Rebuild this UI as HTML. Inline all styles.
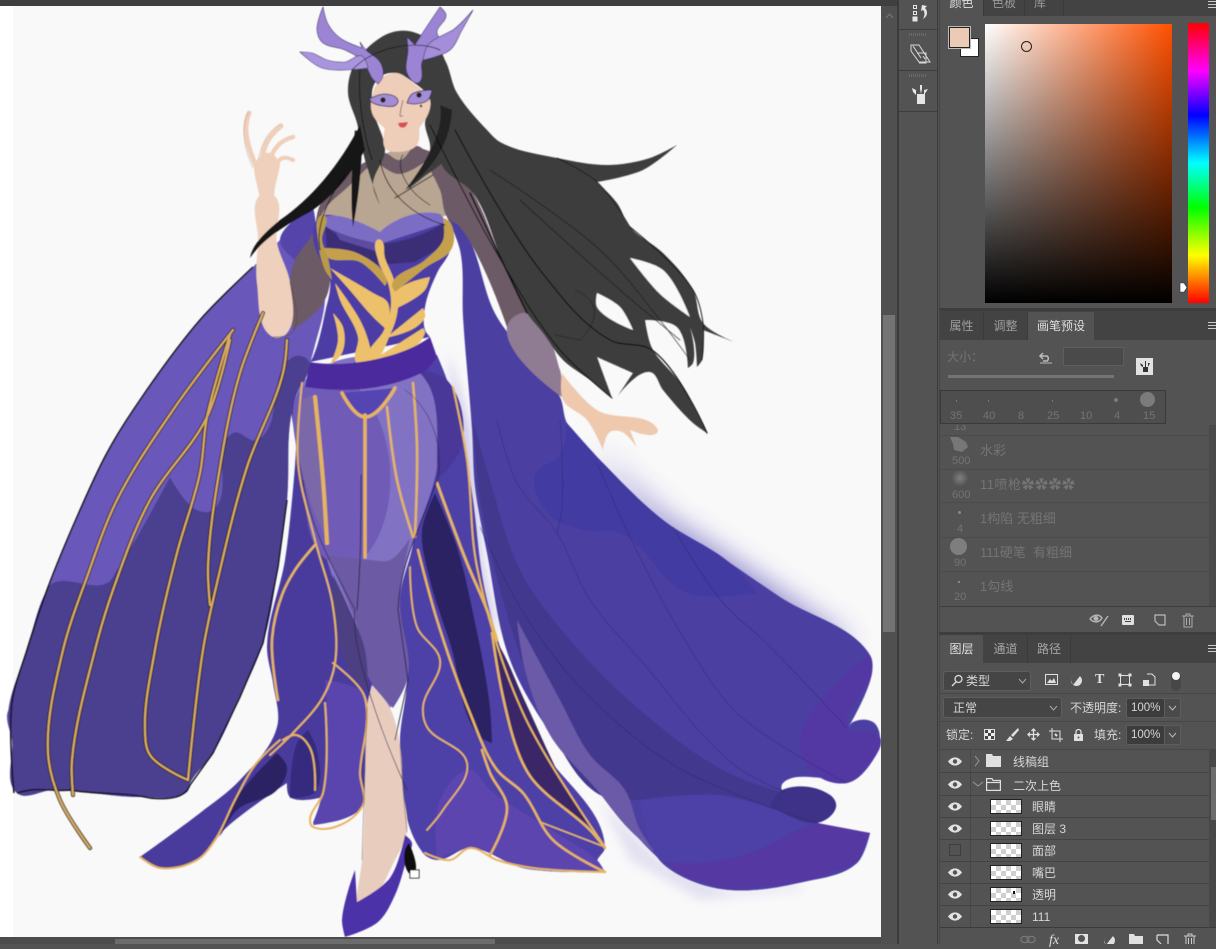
<!DOCTYPE html>
<html><head><meta charset="utf-8"><style>
*{box-sizing:border-box}
html,body{margin:0;padding:0;width:1216px;height:944px;overflow:hidden;background:#535353;font-family:"Liberation Sans","Noto Sans CJK SC",sans-serif}
.a{position:absolute}
.t{position:absolute;white-space:nowrap;line-height:16px;font-size:12px;color:#d6d6d6}
.d{color:#747474}
.tab{position:absolute;text-align:center;font-size:12px;line-height:16px;white-space:nowrap}
.ln{position:absolute;background:#3d3d3d}
.box{position:absolute;background:#454545;border:1px solid #5e5e5e;border-radius:3px}
.inp{position:absolute;background:#3c3c3c;border:1px solid #5c5c5c;border-radius:2px;color:#d6d6d6;font-size:11.5px;line-height:18px;padding-left:4px}
.th{position:absolute;left:990px;width:32px;height:15px;border:1px solid #222;background:repeating-conic-gradient(#cfcfcf 0 25%,#fff 0 50%) 0 0/10px 10px}
.eye{position:absolute;left:948px}
</style></head><body>
<svg id="p" class="a" style="left:0;top:0" width="881" height="944" viewBox="0 0 881 944">
<defs>
<filter id="g" x="-30%" y="-30%" width="160%" height="160%"><feGaussianBlur stdDeviation="15"/></filter>
<filter id="g2" x="-30%" y="-30%" width="160%" height="160%"><feGaussianBlur stdDeviation="5"/></filter>
<filter id="s"><feGaussianBlur stdDeviation="0.45"/></filter>
</defs>
<rect width="881" height="944" fill="#fff"/>
<rect x="13" y="6" width="868" height="931" fill="#f9f9fa"/>
<!-- glows -->
<path d="M590 450L663 520L730 563L780 597L850 645L830 650L760 610L660 540Z" fill="#5549b4" filter="url(#g)" opacity=".95"/>
<path d="M600 800L660 860L730 892L803 884L800 890L700 900L630 860Z" fill="#8c84cc" filter="url(#g2)" opacity=".2"/>
<path d="M448 350L470 430L482 560L500 640L480 600L462 470Z" fill="#a8a2da" filter="url(#g2)" opacity=".6"/>
<g filter="url(#s)">
<!-- left cape -->
<path d="M313 207L280 240L253 267L200 320L140 400L107 453L77 517L47 590L27 650L12 703L7 715L12 740L17 793L53 790L143 797L187 792L190 783L213 753L240 697L263 643L278 567L287 500L293 407L303 385L315 345L325 300L320 250Z" fill="#6959ba"/>
<path d="M53 583L107 583L117 570L170 477L197 510L213 510L233 433L257 440L293 357L308 360L303 385L293 407L287 500L278 567L263 643L240 697L213 753L190 783L187 792L143 797L53 790L17 793L12 740L8 715L27 650L47 590Z" fill="#4b4190"/>
<path d="M313 207L280 240L295 260L315 230Z" fill="#5444aa"/>
<path d="M253 267L200 320L140 400L107 453L77 517L47 590L27 650L12 703L14 793" fill="none" stroke="#111" stroke-width="1.500"/>
<path d="M17 793C40 786 50 792 70 790C100 795 125 792 150 798C170 800 185 798 190 785L213 753L240 697L263 643L278 567L287 500" fill="none" stroke="#111" stroke-width="1.400"/>
<!-- right cape -->
<path d="M447 217L460 225L497 317L560 397L567 423L603 463L663 520L730 563L780 597L870 655L872 673L848 728L853 722L873 722L880 737L873 760L847 783L823 778L783 783L782 790L790 793L830 795L836 807L817 823L870 833L857 863L803 882L730 890L683 877L657 857L597 790L553 737L510 660L487 553L475 487L472 430L463 317L460 250Z" fill="#4c3fa2"/>
<path d="M473 420L480 500L515 640L553 735L600 795L640 800L720 795L817 823L836 807L790 795L723 770L640 710L570 640L520 570L490 480Z" fill="#42388e"/>
<path d="M517 620L560 700L590 755L625 790L640 830L657 855L625 825L597 790L550 735L525 670Z" fill="#6a5aa8"/>
<path d="M640 800L720 795L817 823L870 833L857 863L803 882L730 890L683 877L657 857Z" fill="#4e41a6"/>
<path d="M665 862C710 868 760 855 790 833L817 823L870 833L857 863L803 882L730 890L683 877Z" fill="#5437a2"/>
<path d="M567 423L603 463L663 520L730 563L757 593L687 593L620 533L583 530L550 515L535 475L560 455Z" fill="#433aa2"/>
<path d="M840 680L870 655L872 673L848 728L880 737L873 760L847 783L810 770L800 740Z" fill="#5339a4"/>
<path d="M782 790L830 795L836 807L817 823L770 805Z" fill="#3d3388"/>
<g fill="none" stroke="#2b2468" stroke-width=".6" opacity=".7">
<path d="M497 420L517 483L557 533L590 600L643 663L737 767L787 793"/>
<path d="M560 420L562 507L557 533"/>
<path d="M597 463L630 537L683 637L737 713L847 783"/>
<path d="M673 527L723 603L763 640L847 728"/>
<path d="M480 527L520 607L580 687L677 767L817 823"/>
</g>
<!-- left skirt -->
<path d="M298 390L296 450L292 500L285 560L267 647L273 683L277 727L240 780L200 813L140 857L157 868L197 860L227 827L287 783L290 797L323 797L313 823L340 820L362 807L380 700L340 560L320 390Z" fill="#4a3b9c"/>
<path d="M325 680L365 695L360 775L362 807L313 825L323 790L327 720Z" fill="#5a44ae"/>
<path d="M277 753L287 767L277 790L237 810L220 837L237 797Z" fill="#2a2262"/>
<path d="M297 743L308 730L317 750L315 792L290 798Z" fill="#36297e"/>
<!-- right skirt -->
<path d="M420 370L437 355L447 380L463 440L472 493L487 600L537 740L605 847L597 863L605 872L523 868L470 848L437 860L423 853L400 747L407 680L400 597L413 543Z" fill="#4e3fa6"/>
<path d="M437 860L470 848L523 868L605 872L597 860L560 835L490 790L470 770L440 800Z" fill="#5c44ae"/>
<path d="M420 370L447 380L463 440L447 470L435 480Z" fill="#493798"/>
<path d="M435 493L422 530L430 580L450 643L480 737L492 743L490 707L473 613L457 547Z" fill="#2a2262"/>
<path d="M493 637L503 690L517 747L530 777L593 828L573 800L523 697L500 647Z" fill="#3a2868"/>
<!-- center panel -->
<path d="M305 380L416 370L437 465L433 485L413 543L400 597L407 680L390 708L370 680L327 560L303 480Z" fill="#8272c4"/>
<path d="M305 385L360 390L362 560L345 560L327 560L303 480Z" fill="#6f5cb6"/>
<path d="M303 400L315 395L325 480L330 545L310 500Z" fill="#7a68a8"/>
<path d="M327 555L370 560L390 560L410 538L400 597L407 680L393 708L370 680L357 625Z" fill="#6c5aa5"/>
<path d="M333 575L345 600L365 650L368 690L355 680L335 620Z" fill="#4d3f82"/>
<path d="M342 393L395 388L365 417Z" fill="#5545b2"/>
<!-- leg -->
<path d="M372 685L390 708L400 745L403 790L407 832L395 860L365 905L355 905L362 860L365 780L367 707Z" fill="#e8cdbf"/>
<!-- shoe -->
<path d="M355 870L357 902L390 878L405 835L412 843L408 855L395 895L378 922L345 937L342 920Z" fill="#4c33a8"/>
<path d="M409 843L416 868L413 875L408 872L405 850Z" fill="#0c0c0c"/>
<rect x="410" y="870" width="9" height="8" fill="#fff" stroke="#111"/>
<!-- chest -->
<path d="M383 155L417 147L447 215L380 232L320 215L330 190Z" fill="#b8a592"/>
<path d="M383 153L345 175L320 205L313 233L295 260L290 283L293 330L322 305L330 280L318 240L322 214L350 185Z" fill="#6c5a66"/>
<path d="M417 147L447 160L473 193L503 263L527 313L507 327L460 227L447 217L440 190Z" fill="#6c5a66"/>
<path d="M507 327L527 313L560 370L562 397Z" fill="#8f7b92"/>
<path d="M383 153L400 160L417 146L430 158L398 174L375 160Z" fill="#6c5a66"/>
<!-- right hand -->
<path d="M562 373L597 410L657 428L657 433L630 430L637 448L622 432L610 432L603 450L587 420L563 400Z" fill="#efc9ae"/>
<!-- left arm & hand -->
<path d="M260 195L258 240L257 283L273 337L287 333L290 283L277 243L274 195Z" fill="#efd0bd"/>
<path d="M255 163C252 172 258 185 260 200L274 200C274 185 278 178 280 165C275 150 265 148 255 163Z" fill="#efd0bd"/>
<g fill="none" stroke="#efcfba" stroke-linecap="round">
<path d="M257 168C244 140 244 125 249 113" stroke-width="5"/>
<path d="M262 160C264 143 270 135 281 126" stroke-width="5"/>
<path d="M269 160C276 145 282 140 293 137" stroke-width="4.500"/>
<path d="M276 172C277 158 282 155 293 160" stroke-width="4"/>
</g>
<g fill="none" stroke="#a78f82" stroke-width=".4"><path d="M253 168C240 140 243 120 249 112"/><path d="M258 160C262 143 268 130 281 124"/></g>
<!-- bodice -->
<path d="M320 217L313 237L327 273L330 280L325 313L313 357L310 362L430 337L425 330L425 307L437 273L450 250L448 223L420 218L380 232L350 220Z" fill="#4c3da3"/>
<path d="M323 217C340 212 360 222 380 232C390 222 415 208 440 214L447 222L380 244C360 240 340 235 325 226Z" fill="#7c6dc4"/>
<path d="M325 226C340 240 365 244 380 244C400 243 425 235 446 222L448 243L415 262L378 265L327 252Z" fill="#3a2d77"/>
<path d="M335 232C350 238 365 240 378 244L378 252L340 240Z" fill="#5b4ba0"/>
<!-- gold bodice -->
<g fill="#edc06c">
<path d="M330 268L373 293L388 303L387 330L373 317L347 287Z"/>
<path d="M335 283L360 320L370 347L371 362L357 363L358 337L340 300Z"/>
<path d="M333 313L343 327L342 353L330 365L338 340Z"/>
<path d="M395 293L430 277L425 290L397 308Z"/>
<path d="M387 337L423 308L425 317L390 337Z"/>
<path d="M373 360L423 328L425 333L380 362Z"/>
<path d="M323 248L357 253L387 280L385 286L360 262L327 257Z" fill="#c4a04e"/>
<path d="M377 240L381 240L385 258L394 280L398 307L390 335L372 361L368 358L384 330L391 305L388 283L378 260Z"/>
<path d="M320 216L325 216L322 240L328 258L332 280L325 270L318 240Z" fill="#b89a4a"/>
<path d="M443 218L450 222L452 248L425 268L395 292L392 284L425 260L443 240Z" fill="#c4a04e"/>
</g>
<!-- belt -->
<path d="M310 362C340 368 400 360 430 337L437 357L427 370C400 385 360 395 305 387Z" fill="#4b2a9e"/>
<!-- skirt gold -->
<g fill="none" stroke="#e6b45e" stroke-linecap="round" stroke-linejoin="round">
<path d="M315 397L323 480L327 543" stroke-width="4"/>
<path d="M342 393L365 417L395 388" stroke-width="3.500"/>
<path d="M365 415L365 557" stroke-width="3.500"/>
<path d="M387 407L397 480L413 537" stroke-width="2.500"/>
<path d="M413 383L417 447L415 537" stroke-width="2.500"/>
<path d="M302 383L298 463L315 540L333 607L335 663L323 697L293 733L270 755" stroke-width="2"/>
<path d="M315 545L295 570L282 595L272 640L278 700" stroke-width="2.500"/>
<path d="M333 663L363 693L367 713L360 773L362 807L313 827L310 820L323 793L325 703" stroke-width="2"/>
<path d="M283 740L296 735L310 748L315 790" stroke-width="2"/>
<path d="M140 857L160 868L197 860L215 840L235 800L255 765L280 740" stroke-width="2"/>
<path d="M437 483L467 563L487 610L497 640" stroke-width="2.800"/>
<path d="M492 633L503 697L520 757L533 780L590 830L605 848" stroke-width="2.500"/>
<path d="M410 567L417 627L440 660L423 707L427 727L467 763L443 810L427 830" stroke-width="1.800"/>
<path d="M418 550L437 620L470 713L497 770L523 793L553 840L605 872" stroke-width="2.500"/>
<path d="M482 750L490 773L507 807L490 855" stroke-width="2.500"/>
<path d="M425 853L450 860L470 848L497 860L533 868L605 872" stroke-width="2"/>
<path d="M453 387L467 460L477 567L523 713L605 847" stroke-width="2"/>
<path d="M540 822L605 847" stroke-width="1.500"/>
</g>
<!-- left cape gold -->
<g fill="none" stroke-linecap="round" stroke-linejoin="round">
<g stroke="#111" stroke-width="4">
<path d="M233 330L173 410L117 500L87 577L63 650L48 753L60 800L90 848"/>
<path d="M230 340L207 417L150 500L113 590L95 650L72 760L73 795"/>
<path d="M230 335L207 417L200 473L177 553L155 650L145 730L150 755L188 780"/>
<path d="M263 313L240 373L220 467L208 567L210 605"/>
<path d="M287 340L283 373L247 467L217 583L203 650L188 780"/>
</g>
<g stroke="#d8aa62" stroke-width="2.300">
<path d="M233 330L173 410L117 500L87 577L63 650L48 753L60 800L90 848"/>
<path d="M230 340L207 417L150 500L113 590L95 650L72 760L73 795"/>
<path d="M230 335L207 417L200 473L177 553L155 650L145 730L150 755L188 780"/>
<path d="M263 313L240 373L220 467L208 567L210 605"/>
<path d="M287 340L283 373L247 467L217 583L203 650L188 780"/>
</g>
</g>
<!-- right hair -->
<path d="M413 32L443 57L457 93L487 130L500 142L557 158L610 165L650 158L677 145L643 170L597 182L617 203L630 227L663 253L693 290L703 323L737 343L703 330L702 360L697 367L695 343L690 327L693 363L688 368L677 327L645 320L652 348L680 383L707 433L693 423L663 390L650 372L617 397L633 373L597 357L612 398L590 380L563 360L543 333L527 313L503 263L473 193L443 167L430 100Z" fill="#3c3c3c"/>
<!-- hair gaps -->
<path d="M630 258L663 270L690 317L660 294Z" fill="#f9f9fa"/>
<path d="M597 293L620 307L633 330L597 307Z" fill="#f9f9fa"/>
<!-- head hair -->
<path d="M373 43L393 32L413 32L440 50L450 110L452 150L420 180L407 190L430 150L425 123L430 100L410 80L395 73L383 75L373 87L375 115L385 150L373 185L380 205L365 160L357 123L348 93L353 67Z" fill="#3e3e3e"/>
<!-- face -->
<path d="M375 87L372 113L387 130L403 138L423 123L430 100L413 83L397 73L383 77Z" fill="#eecdb9"/>
<path d="M385 128L385 148L395 152L417 145L419 128L403 138Z" fill="#eecdb9"/>
<!-- black strands -->
<path d="M360 125C340 165 310 200 280 220C265 232 252 245 250 258C262 240 285 225 310 212C335 195 350 175 365 150Z" fill="#141414"/>
<path d="M355 130C352 160 350 200 353 227C358 200 362 170 362 135Z" fill="#141414"/>
<path d="M440 105C445 130 425 165 405 190C425 175 450 150 452 110Z" fill="#222"/>
<!-- horns -->
<path d="M323 7L317 30L322 42L345 50L362 60L368 70L372 78L378 84L383 76L380 62L366 50L360 42L362 48L340 38L328 24Z" fill="#9c84d4" stroke="#3a2f66" stroke-width=".6"/>
<path d="M300 52L322 68L368 68L362 56L345 62L327 60L312 53Z" fill="#a995de" stroke="#3a2f66" stroke-width=".6"/>
<path d="M440 7L420 37L415 45L407 37L408 50L407 73L417 83L421 80L423 60L440 53L450 46L437 33L446 15Z" fill="#9c84d4" stroke="#3a2f66" stroke-width=".6"/>
<path d="M473 10L453 30L447 33L428 45L423 60L450 50L462 30Z" fill="#a48dd9" stroke="#3a2f66" stroke-width=".6"/>
<!-- eyes -->
<path d="M369 99L385 94L398 100L396 105L384 106L373 103Z" fill="#a48dd4" stroke="#2a2250" stroke-width=".8"/>
<path d="M407 103L412 94L432 90L428 100L415 104Z" fill="#a48dd4" stroke="#2a2250" stroke-width=".8"/>
<circle cx="383" cy="100" r="2.600" fill="#222"/><circle cx="419" cy="95" r="2.600" fill="#222"/>
<circle cx="421" cy="106" r="1.200" fill="#222"/>
<path d="M403 100C401 108 400 112 400 116L403 116" fill="none" stroke="#6a5048" stroke-width=".7"/>
<path d="M398 123L408 122L405 127L400 127Z" fill="#d84f55"/>
<!-- hair outlines -->
<g fill="none" stroke="#111" stroke-linecap="round">
<path d="M430 125L495 250L560 350L612 398" stroke-width="1"/>
<path d="M455 130L540 270L610 340L652 350L707 433" stroke-width="1.200"/>
<path d="M470 193L503 263L527 313" stroke-width="1.500"/>
<path d="M520 200L620 290L680 340" stroke-width=".6"/>
<path d="M490 170L600 250L660 320L690 360" stroke-width=".6"/>
<path d="M630 227L693 290L703 323L702 360" stroke-width=".9"/>
<path d="M557 158L597 182L630 227" stroke-width=".7"/>
<path d="M575 290C600 300 600 320 580 340L555 335" stroke-width=".5"/>
<path d="M345 175C330 195 315 225 320 250" stroke-width=".9"/>
<path d="M380 160C385 190 410 215 445 225" stroke-width=".8"/>
<path d="M403 155C395 165 405 190 430 205" stroke-width=".7"/>
<path d="M433 175L395 198" stroke-width=".9"/>
<path d="M360 70C358 95 362 130 372 160" stroke-width=".9"/>
<path d="M352 70C375 45 420 40 440 50" stroke-width=".7"/>
<path d="M303 480C310 530 340 580 355 610C350 640 375 720 407 790" stroke-width=".7" stroke="#2a2040"/>
<path d="M437 480C420 530 400 560 398 610L408 680L395 740" stroke-width=".8" stroke="#1a1530"/>
<path d="M361 475L360 560L357 610" stroke-width=".8" stroke="#1a1530"/>
<path d="M405 390C420 400 445 430 438 480" stroke-width=".5" stroke="#1a1530"/>
<path d="M367 707L362 860M400 745L403 790L407 832" stroke-width=".5" stroke="#6d5d58"/>
<path d="M290 283L293 332L273 337" stroke-width=".6" stroke="#5d4a40"/>
</g>
</g>
</svg>
<script>
(function(){
var N=function(x,y){var l=Math.hypot(x,y)||1;return[x/l,y/l]};
function seg(P,closed){var n=P.length,T=[],i;
 if(n<3)return 'M'+P.map(function(p){return p.join(' ')}).join('L')+(closed?'Z':'');
 for(i=0;i<n;i++){var h=closed?P[(i-1+n)%n]:P[i-1],k=closed?P[(i+1)%n]:P[i+1];
  if(!h||!k){T[i]=null;continue}
  var a=N(P[i][0]-h[0],P[i][1]-h[1]),b=N(k[0]-P[i][0],k[1]-P[i][1]);
  T[i]=(a[0]*b[0]+a[1]*b[1])<-0.15?null:N(a[0]+b[0],a[1]+b[1]);}
 var d='M'+P[0].join(' '),m=closed?n:n-1;
 for(i=0;i<m;i++){var p=P[i],j=(i+1)%n,q=P[j],L=Math.hypot(q[0]-p[0],q[1]-p[1])/3,t=T[i],u=T[j];
  var c1=t?[p[0]+t[0]*L,p[1]+t[1]*L]:p,c2=u?[q[0]-u[0]*L,q[1]-u[1]*L]:q;
  d+='C'+c1[0].toFixed(1)+' '+c1[1].toFixed(1)+' '+c2[0].toFixed(1)+' '+c2[1].toFixed(1)+' '+q[0]+' '+q[1];}
 return d+(closed?'Z':'');}
var list=document.querySelectorAll('#p g path');
for(var z=0;z<list.length;z++){var e=list[z],s=e.getAttribute('d');
 if(!/^[MLZ\d\s.\-]+$/.test(s))continue;
 var tk=s.match(/[MLZ]|-?[\d.]+/g),out='',P=[],w=0;
 while(w<tk.length){var c=tk[w];
  if(c==='M'){if(P.length)out+=seg(P,false);P=[[+tk[w+1],+tk[w+2]]];w+=3}
  else if(c==='L'){P.push([+tk[w+1],+tk[w+2]]);w+=3}
  else{out+=seg(P,true);P=[];w++}}
 if(P.length)out+=seg(P,false);
 e.setAttribute('d',out);}
})();
</script>
<!-- top bar -->
<div class="a" style="left:0;top:0;width:899px;height:6px;background:#3f3f3f"></div>
<!-- bottom scrollbar -->
<div class="a" style="left:0;top:937px;width:881px;height:7px;background:#4c4c4c"></div>
<div class="a" style="left:115px;top:939px;width:380px;height:5px;background:#6c6c6c"></div>
<!-- vertical scrollbar -->
<div class="a" style="left:881px;top:6px;width:16px;height:938px;background:#505050"></div>
<div class="a" style="left:897px;top:0;width:2px;height:944px;background:#3b3b3b"></div>
<div class="a" style="left:883px;top:315px;width:12px;height:317px;background:#747474"></div>
<svg class="a" style="left:885px;top:13px" width="9" height="6"><path d="M1 5L4.500 1L8 5" fill="none" stroke="#777"/></svg>
<!-- dock -->
<div class="a" style="left:899px;top:0;width:39px;height:944px;background:#535353;border-right:1px solid #3b3b3b"></div>
<div class="ln" style="left:899px;top:29px;width:38px;height:1px"></div>
<div class="ln" style="left:899px;top:70px;width:38px;height:1px"></div>
<div class="ln" style="left:899px;top:111px;width:38px;height:1px"></div>
<div class="a" style="left:909px;top:33px;width:18px;height:3px;background:repeating-linear-gradient(90deg,#6b6b6b 0 1px,transparent 1px 2px)"></div>
<div class="a" style="left:909px;top:74px;width:18px;height:3px;background:repeating-linear-gradient(90deg,#6b6b6b 0 1px,transparent 1px 2px)"></div>
<svg class="a" style="left:908px;top:2px" width="22" height="22" fill="none" stroke="#e6e6e6"><rect x="5.500" y="3.500" width="3" height="3"/><rect x="5.500" y="9.500" width="3" height="3"/><rect x="5" y="15" width="4" height="4" fill="#e6e6e6"/><path d="M14 3L19 4L17 6C20 9 20 14 15 17C17 13 17 10 15 8L13 9Z" fill="#e6e6e6" stroke="none"/></svg>
<svg class="a" style="left:908px;top:42px" width="24" height="24" fill="none" stroke="#d8d8d8" stroke-width="1"><path d="M3 3L11 3L22 20L11 20L3 9Z"/><path d="M5 4L13 16M9 11L18 11L18 21L11 21"/><path d="M15 14L17 17"/></svg>
<svg class="a" style="left:908px;top:82px" width="24" height="24" fill="#e6e6e6"><rect x="9" y="12" width="8" height="10"/><path d="M4 6L8 8L8 13L5 10Z"/><path d="M12 3L14 3L14 7L13 12L12 7Z"/><path d="M16 8L20 7L18 10L16 13Z"/></svg>
<!-- right panel bg -->
<div class="a" style="left:939px;top:0;width:277px;height:944px;background:#535353;border-left:1px solid #444"></div>
<!-- color tabs -->
<div class="a" style="left:940px;top:0;width:276px;height:16px;background:#434343"></div>
<div class="a" style="left:940px;top:0;width:43px;height:17px;background:#535353"></div>
<div class="a" style="left:1024px;top:0;width:1px;height:16px;background:#3a3a3a"></div>
<div class="a" style="left:1063px;top:0;width:1px;height:16px;background:#3a3a3a"></div>
<div class="a" style="left:983px;top:0;width:1px;height:16px;background:#3a3a3a"></div>
<div class="tab" style="left:940px;top:-5px;width:43px;color:#dedede">颜色</div>
<div class="tab" style="left:984px;top:-5px;width:40px;color:#9a9a9a">色板</div>
<div class="tab" style="left:1025px;top:-5px;width:30px;color:#9a9a9a">库</div>
<div class="a" style="left:1208px;top:1px;width:8px;height:7px;border-top:1px solid #ccc;border-bottom:1px solid #ccc"><div style="height:1px;background:#ccc;margin-top:2px"></div></div>
<!-- swatches -->
<div class="a" style="left:960px;top:38px;width:19px;height:19px;background:#fff;border:1px solid #222"></div>
<div class="a" style="left:949px;top:27px;width:21px;height:21px;background:#eccbb6;border:1px solid #222;outline:1px solid #bbb"></div>
<!-- color field -->
<div class="a" style="left:985px;top:24px;width:187px;height:279px;background:linear-gradient(to top,#000,rgba(0,0,0,0)),linear-gradient(to right,#fff,#ff5000)"></div>
<div class="a" style="left:1021px;top:41px;width:11px;height:11px;border:1px solid #221;border-radius:50%"></div>
<div class="a" style="left:1188px;top:23px;width:21px;height:280px;background:linear-gradient(to bottom,#f00 0,#f0f 17%,#00f 33%,#0ff 50%,#0f0 66%,#ff0 83%,#f00 100%)"></div>
<svg class="a" style="left:1179px;top:282px" width="9" height="11"><path d="M1 1L5 1L8 5.500L5 10L1 10Z" fill="#fff" stroke="#333" stroke-width=".6"/></svg>
<div class="ln" style="left:939px;top:308px;width:277px;height:3px"></div>
<!-- brush tabs -->
<div class="a" style="left:940px;top:311px;width:276px;height:29px;background:#434343"></div>
<div class="a" style="left:1028px;top:312px;width:66px;height:29px;background:#535353"></div>
<div class="a" style="left:983px;top:312px;width:1px;height:28px;background:#3a3a3a"></div>
<div class="a" style="left:1027px;top:312px;width:1px;height:28px;background:#3a3a3a"></div>
<div class="tab" style="left:940px;top:318px;width:43px;color:#9e9e9e">属性</div>
<div class="tab" style="left:984px;top:318px;width:43px;color:#9e9e9e">调整</div>
<div class="tab" style="left:1028px;top:318px;width:66px;color:#dedede">画笔预设</div>
<div class="a" style="left:1208px;top:322px;width:8px;height:7px;border-top:1px solid #ccc;border-bottom:1px solid #ccc"><div style="height:1px;background:#ccc;margin-top:2px"></div></div>
<div class="t d" style="left:947px;top:349px">大小：</div>
<svg class="a" style="left:1038px;top:350px" width="15" height="14" fill="none" stroke="#bbb" stroke-width="1.500"><path d="M5 3L2 6L5 9M2 6L9 6A3 3 0 0 1 9 11L5 11"/><path d="M2 13L14 13" stroke-width="1"/></svg>
<div class="a" style="left:1063px;top:347px;width:61px;height:19px;background:#4a4a4a;border:1px solid #5d5d5d"></div>
<div class="a" style="left:948px;top:375px;width:166px;height:3px;background:#747474"></div>
<div class="a" style="left:1136px;top:358px;width:17px;height:17px;background:#e2e2e2"></div>
<svg class="a" style="left:1136px;top:358px" width="17" height="17" fill="#333"><rect x="7" y="9" width="5" height="5"/><path d="M4 5L7 7L7 9L5 8Z"/><path d="M9 3L10 3L10 9L9 9Z"/><path d="M12 5L14 5L12 9Z"/></svg>
<!-- presets -->
<div class="a" style="left:940px;top:390px;width:226px;height:34px;background:#4e4e4e;border:1px solid #3a3a3a"></div>
<div class="t d" style="left:950px;top:408px;font-size:11px">35</div>
<div class="t d" style="left:983px;top:408px;font-size:11px">40</div>
<div class="t d" style="left:1018px;top:408px;font-size:11px">8</div>
<div class="t d" style="left:1047px;top:408px;font-size:11px">25</div>
<div class="t d" style="left:1080px;top:408px;font-size:11px">10</div>
<div class="t d" style="left:1114px;top:408px;font-size:11px">4</div>
<div class="t d" style="left:1143px;top:408px;font-size:11px">15</div>
<div class="a" style="left:1140px;top:392px;width:15px;height:15px;border-radius:50%;background:#7b7b7b"></div>
<div class="a" style="left:1114px;top:398px;width:4px;height:4px;border-radius:50%;background:#7b7b7b"></div>
<div class="a" style="left:956px;top:400px;width:1px;height:2px;background:#777"></div>
<div class="a" style="left:988px;top:400px;width:1px;height:2px;background:#777"></div>
<div class="a" style="left:1052px;top:400px;width:1px;height:2px;background:#777"></div>
<!-- list -->
<div class="a" style="left:1209px;top:425px;width:7px;height:181px;background:#4a4a4a"></div>
<div class="ln" style="left:940px;top:435px;width:269px;height:1px;background:#4b4b4b"></div>
<div class="ln" style="left:940px;top:469px;width:269px;height:1px;background:#4b4b4b"></div>
<div class="ln" style="left:940px;top:502px;width:269px;height:1px;background:#4b4b4b"></div>
<div class="ln" style="left:940px;top:537px;width:269px;height:1px;background:#4b4b4b"></div>
<div class="ln" style="left:940px;top:571px;width:269px;height:1px;background:#4b4b4b"></div>
<div class="ln" style="left:940px;top:606px;width:276px;height:1px"></div>
<div class="t d" style="left:954px;top:419px;font-size:11px;line-height:16px;clip-path:inset(6px 0 0 0);height:16px">13</div>
<div class="t d" style="left:952px;top:453px;font-size:11px">500</div>
<div class="t d" style="left:952px;top:487px;font-size:11px">600</div>
<div class="t d" style="left:957px;top:521px;font-size:11px">4</div>
<div class="t d" style="left:954px;top:555px;font-size:11px">90</div>
<div class="t d" style="left:954px;top:589px;font-size:11px">20</div>
<div class="t d" style="left:980px;top:443px;font-size:13px">水彩</div>
<div class="t d" style="left:980px;top:477px;font-size:13px;letter-spacing:.5px">11喷枪✿✿✿✿</div>
<div class="t d" style="left:980px;top:511px;font-size:13px">1构陷 无粗细</div>
<div class="t d" style="left:980px;top:545px;font-size:13px">111硬笔&nbsp; 有粗细</div>
<div class="t d" style="left:980px;top:579px;font-size:13px">1勾线</div>
<svg class="a" style="left:948px;top:436px" width="22" height="18"><path d="M2 1L10 1L18 6L20 11L14 16L6 14L5 8Z" fill="#777"/></svg>
<div class="a" style="left:952px;top:470px;width:16px;height:16px;border-radius:50%;background:radial-gradient(#808080,#535353 75%)"></div>
<div class="a" style="left:958px;top:511px;width:3px;height:3px;border-radius:50%;background:#888"></div>
<div class="a" style="left:950px;top:538px;width:17px;height:17px;border-radius:50%;background:#7e7e7e"></div>
<div class="a" style="left:958px;top:581px;width:2px;height:2px;background:#888"></div>
<svg class="a" style="left:1088px;top:612px" width="22" height="16" fill="none" stroke="#b5b5b5" stroke-width="1.400"><path d="M2 7C6 2 11 2 14 6C11 11 6 11 2 7Z"/><circle cx="8" cy="6.500" r="1.800" fill="#b5b5b5"/><path d="M20 4L13 14"/></svg>
<div class="a" style="left:1122px;top:615px;width:12px;height:10px;background:#e0e0e0;border-radius:1px"></div>
<div class="a" style="left:1124px;top:618px;width:8px;height:2px;background:repeating-linear-gradient(90deg,#444 0 1px,transparent 1px 2px)"></div>
<div class="a" style="left:1125px;top:621px;width:6px;height:1px;background:#444"></div>
<svg class="a" style="left:1154px;top:614px" width="14" height="14" fill="none" stroke="#bbb" stroke-width="1.200"><path d="M1 1L11 1L11 11L5 11L1 7Z"/></svg>
<svg class="a" style="left:1181px;top:613px" width="14" height="15" fill="none" stroke="#aaa" stroke-width="1"><path d="M1 3L13 3M5 3L5 1L9 1L9 3M3 3L3 14L11 14L11 3M5.500 5L5.500 12M8.500 5L8.500 12"/></svg>
<div class="ln" style="left:939px;top:632px;width:277px;height:3px"></div>
<!-- layers tabs -->
<div class="a" style="left:940px;top:635px;width:276px;height:28px;background:#434343"></div>
<div class="a" style="left:940px;top:635px;width:43px;height:29px;background:#535353"></div>
<div class="a" style="left:1027px;top:635px;width:1px;height:28px;background:#3a3a3a"></div>
<div class="a" style="left:1070px;top:635px;width:1px;height:28px;background:#3a3a3a"></div>
<div class="tab" style="left:940px;top:641px;width:43px;color:#e2e2e2">图层</div>
<div class="tab" style="left:984px;top:641px;width:43px;color:#a5a5a5">通道</div>
<div class="tab" style="left:1028px;top:641px;width:42px;color:#a5a5a5">路径</div>
<div class="a" style="left:1208px;top:645px;width:8px;height:7px;border-top:1px solid #ccc;border-bottom:1px solid #ccc"><div style="height:1px;background:#ccc;margin-top:2px"></div></div>
<!-- filter row -->
<div class="box" style="left:943px;top:671px;width:88px;height:20px"></div>
<svg class="a" style="left:951px;top:674px" width="13" height="13" fill="none" stroke="#ddd" stroke-width="1.300"><circle cx="7.500" cy="5" r="3.500"/><path d="M5 8L1 12"/></svg>
<div class="t" style="left:966px;top:673px">类型</div>
<svg class="a" style="left:1018px;top:678px" width="9" height="6"><path d="M1 1L4.500 5L8 1" fill="none" stroke="#aaa"/></svg>
<svg class="a" style="left:1045px;top:674px" width="14" height="12" fill="none" stroke="#e0e0e0"><rect x=".5" y=".5" width="12" height="10"/><path d="M2 9L5 5L7 7L9 4L11 9Z" fill="#e0e0e0" stroke="none"/></svg>
<svg class="a" style="left:1070px;top:674px" width="13" height="13"><circle cx="6.500" cy="6.500" r="5.500" fill="#e0e0e0"/><path d="M3 11L10 2A5.500 5.500 0 0 0 1 6.500Z" fill="#535353"/></svg>
<div class="t" style="left:1095px;top:672px;font-family:'Liberation Serif',serif;font-weight:bold;font-size:14px;color:#e0e0e0">T</div>
<svg class="a" style="left:1118px;top:673px" width="14" height="14" fill="none" stroke="#e0e0e0"><rect x="2.500" y="2.500" width="9" height="9"/><rect x="1" y="1" width="2" height="2" fill="#e0e0e0"/><rect x="11" y="1" width="2" height="2" fill="#e0e0e0"/><rect x="1" y="11" width="2" height="2" fill="#e0e0e0"/><rect x="11" y="11" width="2" height="2" fill="#e0e0e0"/></svg>
<svg class="a" style="left:1143px;top:673px" width="13" height="14" fill="none" stroke="#e0e0e0"><path d="M4 1L9 1L12 4L12 12L6 12"/><rect x="0" y="7" width="6" height="6" fill="#e0e0e0" stroke="none"/></svg>
<div class="a" style="left:1171px;top:672px;width:10px;height:19px;border-radius:5px;background:#474747"></div>
<div class="a" style="left:1172px;top:672px;width:8px;height:8px;border-radius:50%;background:#f4f4f4"></div>
<div class="ln" style="left:940px;top:693px;width:276px;height:1px;background:#474747"></div>
<!-- blend row -->
<div class="box" style="left:943px;top:697px;width:119px;height:21px"></div>
<div class="t" style="left:953px;top:700px">正常</div>
<svg class="a" style="left:1049px;top:705px" width="9" height="6"><path d="M1 1L4.500 5L8 1" fill="none" stroke="#aaa"/></svg>
<div class="t" style="left:1070px;top:700px">不透明度:</div>
<div class="inp" style="left:1126px;top:698px;width:39px;height:20px">100%</div>
<div class="a" style="left:1164px;top:698px;width:17px;height:20px;border:1px solid #5c5c5c;background:#4a4a4a"></div>
<svg class="a" style="left:1168px;top:705px" width="9" height="6"><path d="M1 1L4.500 5L8 1" fill="none" stroke="#bbb"/></svg>
<div class="ln" style="left:940px;top:721px;width:276px;height:1px;background:#474747"></div>
<!-- lock row -->
<div class="t" style="left:946px;top:727px">锁定:</div>
<div class="a" style="left:984px;top:729px;width:11px;height:11px;background:repeating-conic-gradient(#eee 0 25%,#444 0 50%) 0 0/6px 6px;border:1px solid #ddd"></div>
<svg class="a" style="left:1005px;top:727px" width="14" height="15"><path d="M13 1L6 8L8 10L14 3Z M5 9L8 12L5 14L1 14Z" fill="#e0e0e0"/></svg>
<svg class="a" style="left:1027px;top:728px" width="13" height="13" fill="none" stroke="#e0e0e0" stroke-width="1.300"><path d="M6.500 1L6.500 12M1 6.500L12 6.500"/><path d="M4.500 3L6.500 1L8.500 3M4.500 10L6.500 12L8.500 10M3 4.500L1 6.500L3 8.500M10 4.500L12 6.500L10 8.500"/></svg>
<svg class="a" style="left:1049px;top:728px" width="14" height="14" fill="none" stroke="#e0e0e0"><path d="M3 0L3 11L14 11M0 3L11 3L11 14"/><path d="M6 6L8 8" stroke-width="2"/></svg>
<svg class="a" style="left:1073px;top:728px" width="11" height="13"><path d="M3 6V4A2.500 2.500 0 0 1 8 4V6" fill="none" stroke="#e0e0e0" stroke-width="1.300"/><rect x="1" y="6" width="9" height="7" fill="#e0e0e0"/><circle cx="5.500" cy="9.500" r="1" fill="#555"/></svg>
<div class="t" style="left:1094px;top:727px">填充:</div>
<div class="inp" style="left:1126px;top:725px;width:39px;height:20px">100%</div>
<div class="a" style="left:1164px;top:725px;width:17px;height:20px;border:1px solid #5c5c5c;background:#4a4a4a"></div>
<svg class="a" style="left:1168px;top:732px" width="9" height="6"><path d="M1 1L4.500 5L8 1" fill="none" stroke="#bbb"/></svg>
<div class="ln" style="left:940px;top:749px;width:276px;height:1px;background:#474747"></div>
<!-- layers -->
<div class="a" style="left:970px;top:750px;width:1px;height:178px;background:#474747"></div>
<div class="a" style="left:1209px;top:750px;width:7px;height:178px;background:#484848"></div>
<div class="a" style="left:1211px;top:767px;width:5px;height:53px;background:#6c6c6c"></div>
<div class="ln" style="left:940px;top:772px;width:269px;height:1px;background:#444"></div>
<div class="ln" style="left:940px;top:795px;width:269px;height:1px;background:#444"></div>
<div class="ln" style="left:940px;top:817px;width:269px;height:1px;background:#444"></div>
<div class="ln" style="left:940px;top:839px;width:269px;height:1px;background:#444"></div>
<div class="ln" style="left:940px;top:861px;width:269px;height:1px;background:#444"></div>
<div class="ln" style="left:940px;top:883px;width:269px;height:1px;background:#444"></div>
<div class="ln" style="left:940px;top:905px;width:269px;height:1px;background:#444"></div>
<div class="ln" style="left:940px;top:927px;width:276px;height:1px;background:#3b3b3b"></div>
<svg class="eye" style="top:757px" width="14" height="9"><path d="M0 4.500C4 -1 10 -1 14 4.500C10 10 4 10 0 4.500Z" fill="#e2e2e2"/><circle cx="7" cy="4.500" r="2.200" fill="#535353"/></svg>
<svg class="eye" style="top:780px" width="14" height="9"><path d="M0 4.500C4 -1 10 -1 14 4.500C10 10 4 10 0 4.500Z" fill="#e2e2e2"/><circle cx="7" cy="4.500" r="2.200" fill="#535353"/></svg>
<svg class="eye" style="top:802px" width="14" height="9"><path d="M0 4.500C4 -1 10 -1 14 4.500C10 10 4 10 0 4.500Z" fill="#e2e2e2"/><circle cx="7" cy="4.500" r="2.200" fill="#535353"/></svg>
<svg class="eye" style="top:824px" width="14" height="9"><path d="M0 4.500C4 -1 10 -1 14 4.500C10 10 4 10 0 4.500Z" fill="#e2e2e2"/><circle cx="7" cy="4.500" r="2.200" fill="#535353"/></svg>
<div class="a" style="left:949px;top:844px;width:12px;height:12px;border:1px solid #3e3e3e"></div>
<svg class="eye" style="top:868px" width="14" height="9"><path d="M0 4.500C4 -1 10 -1 14 4.500C10 10 4 10 0 4.500Z" fill="#e2e2e2"/><circle cx="7" cy="4.500" r="2.200" fill="#535353"/></svg>
<svg class="eye" style="top:890px" width="14" height="9"><path d="M0 4.500C4 -1 10 -1 14 4.500C10 10 4 10 0 4.500Z" fill="#e2e2e2"/><circle cx="7" cy="4.500" r="2.200" fill="#535353"/></svg>
<svg class="eye" style="top:912px" width="14" height="9"><path d="M0 4.500C4 -1 10 -1 14 4.500C10 10 4 10 0 4.500Z" fill="#e2e2e2"/><circle cx="7" cy="4.500" r="2.200" fill="#535353"/></svg>
<svg class="a" style="left:973px;top:755px" width="8" height="12"><path d="M2 1L6 6L2 11" fill="none" stroke="#999"/></svg>
<svg class="a" style="left:972px;top:780px" width="12" height="8"><path d="M1 2L6 6L11 2" fill="none" stroke="#999"/></svg>
<svg class="a" style="left:986px;top:754px" width="15" height="13"><path d="M0 0H6L7 2H15V13H0Z" fill="#e0e0e0"/></svg>
<svg class="a" style="left:986px;top:778px" width="15" height="13" fill="none" stroke="#e0e0e0" stroke-width="1.200"><path d="M.6 12.400V.6H6L7 2.500H14.400V12.400Z"/><path d="M.6 4.500H14.400"/></svg>
<div class="t" style="left:1013px;top:754px">线稿组</div>
<div class="t" style="left:1013px;top:778px">二次上色</div>
<div class="th" style="top:799px"></div><div class="t" style="left:1032px;top:799px">眼睛</div>
<div class="th" style="top:821px"></div><div class="t" style="left:1032px;top:821px">图层 3</div>
<div class="th" style="top:843px"></div><div class="t" style="left:1032px;top:843px">面部</div>
<div class="th" style="top:865px"></div><div class="t" style="left:1032px;top:865px">嘴巴</div>
<div class="th" style="top:887px"></div><div class="t" style="left:1032px;top:887px">透明</div>
<div class="a" style="left:1013px;top:891px;width:2px;height:3px;background:#111"></div>
<div class="th" style="top:909px"></div><div class="t" style="left:1032px;top:909px">111</div>
<!-- layers footer -->
<svg class="a" style="left:1020px;top:935px" width="16" height="9" fill="none" stroke="#777" stroke-width="1.300"><rect x="1" y="1.500" width="8" height="6" rx="3"/><rect x="7" y="1.500" width="8" height="6" rx="3"/></svg>
<div class="t" style="left:1049px;top:933px;font-family:'Liberation Serif',serif;font-style:italic;font-size:14px;color:#ddd">fx</div>
<div class="a" style="left:1075px;top:934px;width:13px;height:10px;background:#e2e2e2"></div>
<div class="a" style="left:1078px;top:935px;width:7px;height:7px;border-radius:50%;background:#535353"></div>
<svg class="a" style="left:1103px;top:934px" width="13" height="10"><circle cx="6.500" cy="6.500" r="5.500" fill="#e0e0e0"/><path d="M3 11L10 2A5.500 5.500 0 0 0 1 6.500Z" fill="#535353"/></svg>
<svg class="a" style="left:1129px;top:933px" width="14" height="11"><path d="M0 1H5L6 3H14V11H0Z" fill="#e0e0e0"/></svg>
<svg class="a" style="left:1156px;top:934px" width="14" height="10" fill="none" stroke="#ddd" stroke-width="1.200"><path d="M1 1L12 1L12 10M1 1L1 6L5 10"/></svg>
<svg class="a" style="left:1183px;top:933px" width="14" height="11" fill="none" stroke="#ccc"><path d="M1 3L13 3M5 3L5 1L9 1L9 3M3 3L3 11M11 3L11 11M5.500 5L5.500 11M8.500 5L8.500 11"/></svg>
</body></html>
